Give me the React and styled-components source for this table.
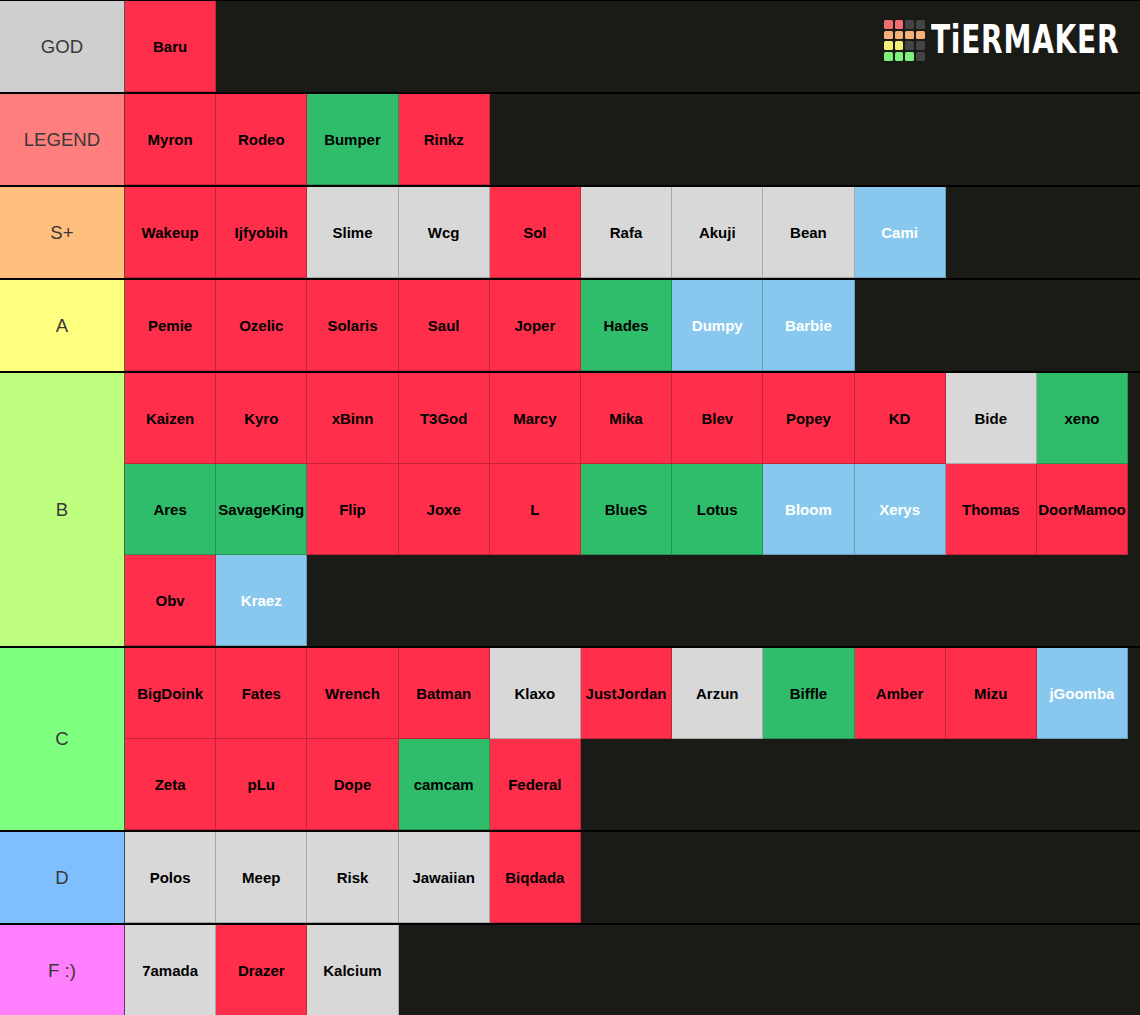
import React from 'react';
import styled, { createGlobalStyle } from 'styled-components';

const GlobalStyle = createGlobalStyle`
  html, body {
    margin: 0;
    padding: 0;
    background: #1a1a17;
  }
  body {
    font-family: "Liberation Sans", Arial, sans-serif;
  }
`;

const TILE_COLORS = {
  r: '#ff2e4b',
  g: '#2fbd6b',
  w: '#d8d8d8',
  b: '#88c8ee',
};

const tiers = [
  { label: 'GOD', color: '#cfcfcf', items: [['Baru', 'r']] },
  {
    label: 'LEGEND',
    color: '#ff7f7f',
    items: [['Myron', 'r'], ['Rodeo', 'r'], ['Bumper', 'g'], ['Rinkz', 'r']],
  },
  {
    label: 'S+',
    color: '#ffbf7f',
    items: [
      ['Wakeup', 'r'], ['Ijfyobih', 'r'], ['Slime', 'w'], ['Wcg', 'w'], ['Sol', 'r'],
      ['Rafa', 'w'], ['Akuji', 'w'], ['Bean', 'w'], ['Cami', 'b'],
    ],
  },
  {
    label: 'A',
    color: '#ffff7f',
    items: [
      ['Pemie', 'r'], ['Ozelic', 'r'], ['Solaris', 'r'], ['Saul', 'r'], ['Joper', 'r'],
      ['Hades', 'g'], ['Dumpy', 'b'], ['Barbie', 'b'],
    ],
  },
  {
    label: 'B',
    color: '#bfff7f',
    items: [
      ['Kaizen', 'r'], ['Kyro', 'r'], ['xBinn', 'r'], ['T3God', 'r'], ['Marcy', 'r'],
      ['Mika', 'r'], ['Blev', 'r'], ['Popey', 'r'], ['KD', 'r'], ['Bide', 'w'], ['xeno', 'g'],
      ['Ares', 'g'], ['SavageKing', 'g'], ['Flip', 'r'], ['Joxe', 'r'], ['L', 'r'],
      ['BlueS', 'g'], ['Lotus', 'g'], ['Bloom', 'b'], ['Xerys', 'b'], ['Thomas', 'r'],
      ['DoorMamoo', 'r'], ['Obv', 'r'], ['Kraez', 'b'],
    ],
  },
  {
    label: 'C',
    color: '#7fff7f',
    items: [
      ['BigDoink', 'r'], ['Fates', 'r'], ['Wrench', 'r'], ['Batman', 'r'], ['Klaxo', 'w'],
      ['JustJordan', 'r'], ['Arzun', 'w'], ['Biffle', 'g'], ['Amber', 'r'], ['Mizu', 'r'],
      ['jGoomba', 'b'], ['Zeta', 'r'], ['pLu', 'r'], ['Dope', 'r'], ['camcam', 'g'],
      ['Federal', 'r'],
    ],
  },
  {
    label: 'D',
    color: '#7fbfff',
    items: [['Polos', 'w'], ['Meep', 'w'], ['Risk', 'w'], ['Jawaiian', 'w'], ['Biqdada', 'r']],
  },
  {
    label: 'F :)',
    color: '#ff7fff',
    items: [['7amada', 'w'], ['Drazer', 'r'], ['Kalcium', 'w']],
  },
];

const LOGO_GRID = [
  '#ef6e6e', '#ef6e6e', '#444', '#444',
  '#f6b07a', '#f6b07a', '#f6b07a', '#f6b07a',
  '#f2ee78', '#f2ee78', '#444', '#444',
  '#7ef07c', '#7ef07c', '#7ef07c', '#444',
];

const Board = styled.div`
  position: relative;
  width: 1140px;
  background: #1a1a17;
  border-top: 1px solid #000;
  box-sizing: border-box;
`;

const Row = styled.div`
  display: flex;
  border-bottom: 2px solid #000;

  &:last-child {
    border-bottom: none;
  }
`;

const Label = styled.div`
  flex: 0 0 124px;
  display: flex;
  align-items: center;
  justify-content: center;
  background: ${(p) => p.$color};
  border-right: 1px solid rgba(0, 0, 0, 0.6);
  color: #383838;
  font-size: 18.6px;
  font-family: "Liberation Sans", Arial, sans-serif;
`;

const Items = styled.div`
  flex: 1;
  display: flex;
  flex-wrap: wrap;
  align-content: flex-start;
  min-height: 91px;
`;

const Tile = styled.div`
  box-sizing: border-box;
  width: 91.2px;
  height: 91px;
  display: flex;
  align-items: center;
  justify-content: center;
  background: ${(p) => TILE_COLORS[p.$kind]};
  border-right: 1px solid rgba(0, 0, 0, 0.22);
  border-bottom: 1px solid rgba(0, 0, 0, 0.22);
  color: ${(p) => (p.$kind === 'b' ? '#fff' : '#000')};
  font-weight: bold;
  font-size: 15px;
  white-space: nowrap;
  overflow: hidden;
`;

const Logo = styled.div`
  position: absolute;
  top: 19px;
  left: 884px;
  display: flex;
  align-items: center;
  gap: 6px;
  pointer-events: none;
`;

const LogoGrid = styled.div`
  display: grid;
  grid-template-columns: repeat(4, 8.7px);
  grid-auto-rows: 8.7px;
  gap: 2px;
`;

const LogoCell = styled.span`
  background: ${(p) => p.$color};
  border-radius: 1.5px;
`;

const LogoText = styled.span`
  display: inline-block;
  color: #fff;
  font-family: "DejaVu Sans", "Liberation Sans", sans-serif;
  font-weight: bold;
  font-size: 39px;
  line-height: 40px;
  letter-spacing: 1px;
  transform: scaleX(0.72);
  transform-origin: left center;
`;

export default function App() {
  return (
    <>
      <GlobalStyle />
      <Board>
        {tiers.map((tier) => (
          <Row key={tier.label}>
            <Label $color={tier.color}>{tier.label}</Label>
            <Items>
              {tier.items.map(([name, kind]) => (
                <Tile key={name} $kind={kind}>
                  {name}
                </Tile>
              ))}
            </Items>
          </Row>
        ))}
        <Logo>
          <LogoGrid>
            {LOGO_GRID.map((c, i) => (
              <LogoCell key={i} $color={c} />
            ))}
          </LogoGrid>
          <LogoText>TiERMAKER</LogoText>
        </Logo>
      </Board>
    </>
  );
}
